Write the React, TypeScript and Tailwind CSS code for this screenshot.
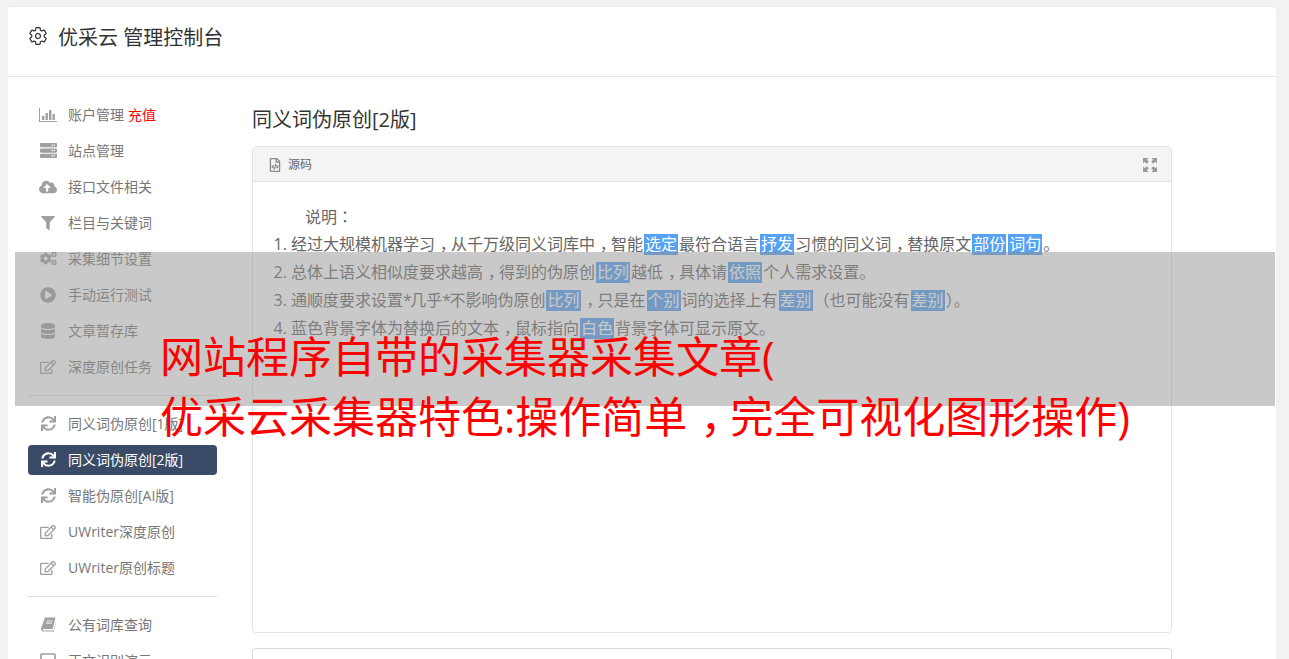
import React from "react";
import { FaServer, FaCloudUploadAlt, FaFilter, FaCogs, FaPlayCircle, FaDatabase, FaRegEdit, FaSync, FaRegFileCode, FaRegSquare } from "react-icons/fa";
import { IoSettingsOutline } from "react-icons/io5";

const font = "font-['Open_Sans','Noto_Sans_CJK_SC',sans-serif]";

function ChartIcon() {
  return (
    <svg width="18" height="14" viewBox="0 0 18 14" fill="currentColor">
      <path d="M0 0h1v13h17v1H0z" />
      <rect x="3" y="8" width="2.4" height="4" />
      <rect x="6.5" y="5" width="2.4" height="7" />
      <rect x="10" y="2" width="2.4" height="10" />
      <rect x="13.5" y="6" width="2.4" height="6" />
    </svg>
  );
}

function BookIcon() {
  return (
    <svg width="15" height="15" viewBox="0 0 15 15" fill="currentColor">
      <path d="M4 0.5h10.5l-2.8 11.5H2.8c-0.7 0-0.9 0.5-0.8 0.9 0.1 0.3 0.4 0.6 0.9 0.6h9.6l2.2-8.6 0.1 1.2-2.1 8.4H2.4C1 14.5 0 13.4 0.1 12c0-0.4 0.1-0.8 0.2-1.2z" />
      <path d="M5.6 3.4h6v0.9h-6zM5 5.6h6v0.9H5z" fill="#ffffff" />
    </svg>
  );
}

function ExpandIcon() {
  return (
    <svg width="14" height="14" viewBox="0 0 14 14" fill="currentColor">
      <path d="M0 0h5.5L3.8 1.7l2 2-2.1 2.1-2-2L0 5.5zM14 0v5.5l-1.7-1.7-2 2-2.1-2.1 2-2L8.5 0zM0 14V8.5l1.7 1.7 2-2 2.1 2.1-2 2L5.5 14zM14 14H8.5l1.7-1.7-2-2 2.1-2.1 2 2L14 8.5z" />
    </svg>
  );
}

function Item({ icon: Icon, label, active, extra, size = "text-[16px]" }: { icon: any; label: string; active?: boolean; extra?: React.ReactNode; size?: string }) {
  return (
    <div className={`flex items-center h-[30px] mb-[6px] rounded-[4px] pl-[11px] pb-px text-[14px] ${active ? "bg-[#3a4b67] text-white" : "text-[#777777]"}`}>
      <span className={`w-[18px] flex justify-center ${size} mr-[11px] ${active ? "text-white" : "text-[#a0a0a0]"}`}>
        <Icon />
      </span>
      <span>{label}</span>
      {extra}
    </div>
  );
}

function Hl({ children }: { children: React.ReactNode }) {
  return <span className="inline-block bg-[#55a1f3] text-white px-px mx-px leading-[21px]">{children}</span>;
}

function Pu({ children }: { children: React.ReactNode }) {
  return <span className="font-['Noto_Sans_CJK_TC',sans-serif] leading-none">{children}</span>;
}

function Comma() {
  return <span className="inline-block translate-x-[0.3em]">，</span>;
}

function Star() {
  return <span className="tracking-[-1.6px]">*</span>;
}

export default function App() {
  return (
    <div className={`relative h-[659px] overflow-hidden bg-[#f2f2f2] pt-[6px] px-[8px] ${font}`}>
      <div className="w-[1268px] bg-white rounded-[4px] h-[700px] border-t border-[#e8e8e8]">
        <div className="h-[70px] border-b border-[#e5e5e5] flex items-center pl-[20px] text-[20px] text-[#333333] pb-[8px]">
          <IoSettingsOutline className="text-[20px] mr-[10px] -mt-[4px]" />
          <span>优采云 管理控制台</span>
        </div>
        <div className="flex">
          <div className="w-[189px] ml-[20px] mt-[23px] shrink-0">
            <Item icon={ChartIcon} label="账户管理" extra={<span className="text-[#ff0000] ml-[4px]">充值</span>} />
            <Item icon={FaServer} label="站点管理" size="text-[17px]" />
            <Item icon={FaCloudUploadAlt} label="接口文件相关" size="text-[18px]" />
            <Item icon={FaFilter} label="栏目与关键词" size="text-[14px]" />
            <Item icon={FaCogs} label="采集细节设置" size="text-[17px]" />
            <Item icon={FaPlayCircle} label="手动运行测试" />
            <Item icon={FaDatabase} label="文章暂存库" />
            <Item icon={FaRegEdit} label="深度原创任务" />
            <div className="h-px bg-[#e0e0e0] mt-[13px] mb-[13px]" />
            <Item icon={FaSync} label="同义词伪原创[1版]" size="text-[15px]" />
            <Item icon={FaSync} label="同义词伪原创[2版]" active size="text-[15px]" />
            <Item icon={FaSync} label="智能伪原创[AI版]" size="text-[15px]" />
            <Item icon={FaRegEdit} label="UWriter深度原创" />
            <Item icon={FaRegEdit} label="UWriter原创标题" />
            <div className="h-px bg-[#e0e0e0] mt-[13px] mb-[13px]" />
            <Item icon={BookIcon} label="公有词库查询" />
            <Item icon={FaRegSquare} label="正文识别演示" size="text-[18px]" />
          </div>
          <div className="ml-[35px] w-[920px]">
            <h1 className="text-[20px] text-[#333333] leading-[28px] mt-[29px] mb-[12px]">同义词伪原创[2版]</h1>
            <div className="h-[487px] border border-[#e3e3e3] rounded-[4px]">
              <div className="h-[35px] bg-[#f4f4f4] border-b border-[#e3e3e3] flex items-center px-[15px] pt-px text-[12px] text-[#666666]">
                <FaRegFileCode className="text-[#888888] text-[14px] mr-[6px]" />
                <span>源码</span>
                <span className="ml-auto text-[#999999] -mr-[1px]">
                  <ExpandIcon />
                </span>
              </div>
              <div className="pt-[21px] text-[16px] leading-[28px] text-[#666666]">
                <p className="pl-[52px] h-[28px]">说明<Pu>：</Pu></p>
                <ol className="list-decimal pl-[38px] -mt-[1px]">
                  <li className="h-[28px]">经过大规模机器学习<Comma />从千万级同义词库中<Comma />智能<Hl>选定</Hl>最符合语言<Hl>抒发</Hl>习惯的同义词<Comma />替换原文<Hl>部份</Hl><Hl>词句</Hl>。</li>
                  <li className="h-[28px]">总体上语义相似度要求越高<Comma />得到的伪原创<Hl>比列</Hl>越低<Comma />具体请<Hl>依照</Hl>个人需求设置。</li>
                  <li className="h-[28px]">通顺度要求设置<Star />几乎<Star />不影响伪原创<Hl>比列</Hl><Comma />只是在<Hl>个别</Hl>词的选择上有<Hl>差别</Hl><Pu>（</Pu>也可能没有<Hl>差别</Hl><Pu>）</Pu>。</li>
                  <li className="h-[28px]">蓝色背景字体为替换后的文本<Comma />鼠标指向<Hl>白色</Hl>背景字体可显示原文。</li>
                </ol>
              </div>
            </div>
            <div className="h-[60px] mt-[15px] border border-[#d8d8d8] rounded-[4px]" />
          </div>
        </div>
      </div>
      <div className="absolute left-[15px] top-[252px] w-[1260px] h-[154px] bg-[rgba(148,148,148,0.5)] pt-[75px] pl-[145px] text-[43px] leading-[60px] text-[#ff0000]">
        <div>网站程序自带的采集器采集文章(</div>
        <div className="whitespace-nowrap">优采云采集器特色:操作简单<Comma />完全可视化图形操作)</div>
      </div>
    </div>
  );
}
